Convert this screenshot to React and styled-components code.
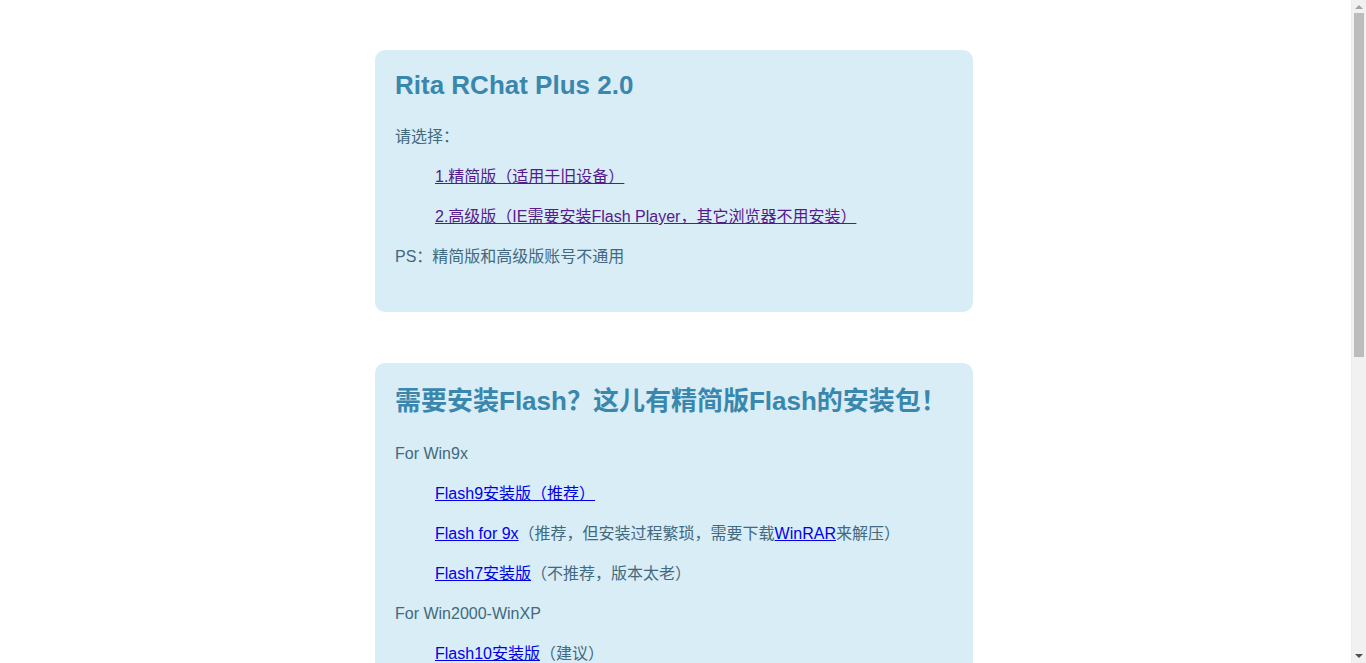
import React from "react";
import styled, { createGlobalStyle } from "styled-components";

const GlobalStyle = createGlobalStyle`
  html, body {
    margin: 0;
    padding: 0;
    background: #ffffff;
  }
  body {
    font-family: "Liberation Sans", Arial, "Noto Sans CJK SC", sans-serif;
    font-size: 16px;
    color: #42697d;
  }
`;

const Page = styled.main`
  display: flex;
  flex-direction: column;
  align-items: center;
  gap: 51px;
  width: calc(100% - 18px);
  padding: 50px 0 58px;
`;

const Card = styled.section`
  box-sizing: border-box;
  width: 598px;
  background: #d9edf7;
  border-radius: 10px;
  padding: 20px 20px 27px;
`;

const Title = styled.h2`
  margin: 0 0 ${(p) => p.$mb || "25px"};
  font-family: "Liberation Sans", Arial, "Noto Sans CJK SC", sans-serif;
  font-size: 26px;
  font-weight: bold;
  line-height: ${(p) => p.$lh || "30px"};
  color: #3a87ad;
`;

const Para = styled.p`
  margin: 16px 0;
  line-height: 24px;
  padding-left: ${(p) => (p.$indent ? "40px" : "0")};
`;

const Link = styled.a`
  color: ${(p) => (p.$visited ? "#551a8b" : "#0000ee")};
  text-decoration: underline;
`;

const ScrollTrack = styled.div`
  position: fixed;
  top: 0;
  right: 0;
  width: 15px;
  height: 100vh;
  background: #f1f1f1;
  border-left: 1px solid #ececec;
  box-sizing: border-box;
`;

const ScrollThumb = styled.div`
  position: absolute;
  top: 13px;
  left: 2px;
  width: 10px;
  height: 344px;
  background: #bcbcbc;
`;

const Arrow = styled.div`
  position: absolute;
  left: 3px;
  width: 0;
  height: 0;
  border-left: 4px solid transparent;
  border-right: 4px solid transparent;
  ${(p) =>
    p.$down
      ? "bottom: 5px; border-top: 4px solid #505050;"
      : "top: 5px; border-bottom: 4px solid #a3a3a3;"}
`;

export default function App() {
  return (
    <>
      <GlobalStyle />
      <Page>
        <Card>
          <Title>Rita RChat Plus 2.0</Title>
          <Para>请选择：</Para>
          <Para $indent>
            <Link href="#" $visited>1.精简版（适用于旧设备）</Link>
          </Para>
          <Para $indent>
            <Link href="#" $visited>2.高级版（IE需要安装Flash Player，其它浏览器不用安装）</Link>
          </Para>
          <Para>PS：精简版和高级版账号不通用</Para>
        </Card>

        <Card>
          <Title $lh="36px" $mb="23px">需要安装Flash？这儿有精简版Flash的安装包！</Title>
          <Para>For Win9x</Para>
          <Para $indent>
            <Link href="#">Flash9安装版（推荐）</Link>
          </Para>
          <Para $indent>
            <Link href="#">Flash for 9x</Link>（推荐，但安装过程繁琐，需要下载<Link href="#">WinRAR</Link>来解压）
          </Para>
          <Para $indent>
            <Link href="#">Flash7安装版</Link>（不推荐，版本太老）
          </Para>
          <Para>For Win2000-WinXP</Para>
          <Para $indent>
            <Link href="#">Flash10安装版</Link>（建议）
          </Para>
          <Para $indent>
            <Link href="#">Flash11安装版</Link>
          </Para>
          <Para>For Vista-Win7</Para>
          <Para $indent>
            <Link href="#">Flash11安装版</Link>（建议）
          </Para>
        </Card>

        <Card>
          <Title>其它</Title>
          <Para>如有问题请联系管理员</Para>
          <Para $indent>
            <Link href="#">返回首页</Link>
          </Para>
        </Card>
      </Page>
      <ScrollTrack>
        <Arrow />
        <ScrollThumb />
        <Arrow $down />
      </ScrollTrack>
    </>
  );
}
